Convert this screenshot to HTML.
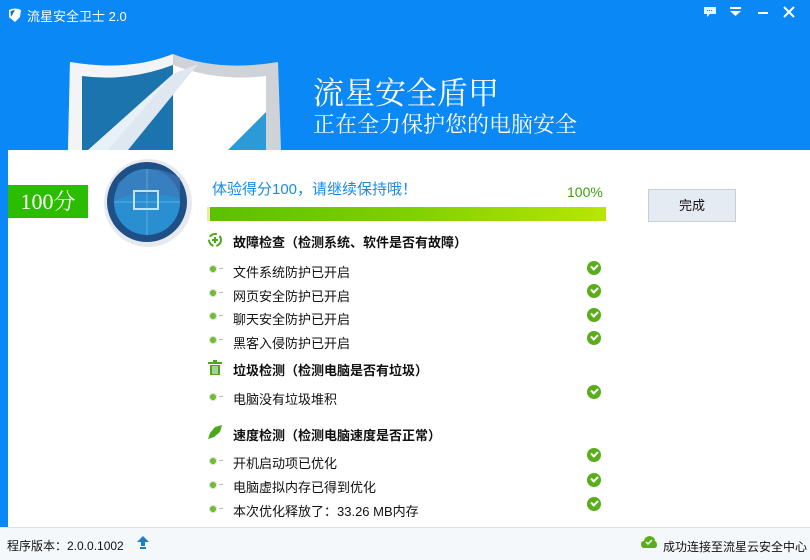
<!DOCTYPE html>
<html><head><meta charset="utf-8"><style>
*{margin:0;padding:0;box-sizing:border-box}
body{width:810px;height:560px;overflow:hidden;position:relative;background:#fff;font-family:"Liberation Sans","Noto Sans CJK SC",sans-serif;font-size:13px;color:#111}
.hdr{position:absolute;left:0;top:0;width:810px;height:150px;background:#0a88f5}
.abs{position:absolute;white-space:nowrap}
.strip{position:absolute;left:0;top:150px;width:8px;height:377px;background:#0a88f5}
.foot{position:absolute;left:0;top:527px;width:810px;height:33px;background:#f5f8fb;border-top:1px solid #d8e2ea}
.ck{position:absolute;left:587px;width:14px;height:14px;border-radius:50%;background:#5aae1a}
.ck:after{content:"";position:absolute;left:4px;top:3px;width:5px;height:3px;border-left:2px solid #fff;border-bottom:2px solid #fff;transform:rotate(-45deg)}
.bl{position:absolute;left:210px;width:6px;height:6px;border-radius:50%;background:#6cbf2a;box-shadow:0 0 0 1px #ddd}
.bl:after{content:"";position:absolute;left:9px;top:2px;width:4px;height:1px;background:#bbb}
.h{font-weight:bold;left:233px}
.it{left:233px}
</style></head><body>
<div class="hdr"></div>
<svg class="abs" style="left:8px;top:8px" width="14" height="14" viewBox="0 0 14 14"><path d="M1 2 Q7 -1 13 2 L12 9 Q7 14 7 14 Q2 10 1 9Z" fill="#fff"/><path d="M2.5 3 L7 2 L3 9Z" fill="#1a6fb0"/></svg>
<div class="abs" style="left:27px;top:6px;color:#fff;font-size:13px">流星安全卫士 2.0</div>
<svg class="abs" style="left:703px;top:6px" width="14" height="12"><rect x="1" y="1" width="12" height="7" fill="#e8f3ff"/><path d="M4 8 L4 11 L7 8Z" fill="#e8f3ff"/><rect x="4" y="4" width="1" height="1" fill="#0a88f5"/><rect x="6" y="4" width="1" height="1" fill="#0a88f5"/><rect x="8" y="4" width="1" height="1" fill="#0a88f5"/></svg>
<svg class="abs" style="left:730px;top:6px" width="12" height="12"><rect x="0" y="1" width="11" height="2" fill="#fff"/><path d="M0 5 L11 5 L5.5 10Z" fill="#fff"/></svg>
<div class="abs" style="left:758px;top:12px;width:10px;height:2px;background:#fff"></div>
<svg class="abs" style="left:783px;top:6px" width="12" height="12"><path d="M1 1 L11 11 M11 1 L1 11" stroke="#fff" stroke-width="2"/></svg>
<svg class="abs" style="left:68px;top:52px" width="215" height="98" viewBox="0 0 215 98">
<path d="M2 10 Q60 20 105 2 Q150 20 210 10 L213 98 L0 98Z" fill="#cfd3d8"/>
<path d="M2 10 Q60 20 105 2 L105 98 L0 98Z" fill="#f2f4f6"/>
<path d="M14 24 Q60 30 105 13 L105 98 L14 98Z" fill="#1b74ae"/>
<path d="M105 13 Q150 30 198 24 L198 98 L105 98Z" fill="#fff"/>
<path d="M40 98 L105 40 L105 22 L20 98Z" fill="#fff" opacity="0.9"/>
<path d="M105 22 L130 12 L60 98 L40 98Z" fill="#dfe8f1"/>
<path d="M198 60 L160 98 L198 98Z" fill="#2d9ad8"/>
</svg>
<div class="abs" style="left:313px;top:68px;color:#fff;font-size:31px;font-family:'Liberation Serif','Noto Serif CJK SC',serif">流星安全盾甲</div>
<div class="abs" style="left:313px;top:108px;color:#fff;font-size:22px;font-family:'Liberation Serif','Noto Serif CJK SC',serif">正在全力保护您的电脑安全</div>
<div class="strip"></div>
<div class="abs" style="left:8px;top:185px;width:80px;height:33px;background:#2cbd00;color:#fff;font-size:22px;line-height:33px;text-align:center;font-family:'Liberation Serif','Noto Serif CJK SC',serif">100分</div>
<svg class="abs" style="left:103px;top:158px" width="90" height="90" viewBox="0 0 90 90">
<circle cx="45" cy="45" r="44" fill="#e6eaee"/>
<circle cx="44" cy="44" r="40" fill="#1e4f86"/>
<circle cx="44" cy="44" r="33" fill="#2a8fd0"/>
<path d="M11 44 Q30 30 77 40 L77 20 Q44 0 15 25Z" fill="#3f78b8" opacity=".7"/>
<rect x="31" y="33" width="24" height="18" fill="none" stroke="#bfe4ff" stroke-width="2"/>
<path d="M44 11 V77 M11 44 H77" stroke="#9fd2f3" stroke-width="0.7" opacity=".6"/>
</svg>
<div class="abs" style="left:212px;top:178px;color:#1a8ae6;font-size:15px">体验得分100，请继续保持哦！</div>
<div class="abs" style="left:567px;top:184px;color:#3ca10e;font-size:14px">100%</div>
<div class="abs" style="left:207px;top:207px;width:399px;height:14px;background:linear-gradient(90deg,#5cc000,#7fd000 50%,#b8e600);border-left:3px solid #efe8a0"></div>
<div class="abs" style="left:648px;top:189px;width:88px;height:33px;background:#e4ebf3;border:1px solid #c8ced6;text-align:center;line-height:31px;font-size:13px">完成</div>
<svg class="abs" style="left:207px;top:232px" width="16" height="16"><circle cx="8" cy="8" r="6" fill="none" stroke="#4aa81a" stroke-width="2" stroke-dasharray="8 3"/><path d="M8 5 V11 M5 8 H11" stroke="#4aa81a" stroke-width="2"/></svg>
<div class="abs h" style="top:232px">故障检查（检测系统、软件是否有故障）</div>
<div class="bl" style="top:266px"></div><div class="abs it" style="top:262px">文件系统防护已开启</div><div class="ck" style="top:261px"></div>
<div class="bl" style="top:290px"></div><div class="abs it" style="top:286px">网页安全防护已开启</div><div class="ck" style="top:284px"></div>
<div class="bl" style="top:313px"></div><div class="abs it" style="top:309px">聊天安全防护已开启</div><div class="ck" style="top:308px"></div>
<div class="bl" style="top:337px"></div><div class="abs it" style="top:333px">黑客入侵防护已开启</div><div class="ck" style="top:331px"></div>
<svg class="abs" style="left:208px;top:360px" width="14" height="16"><rect x="0" y="2" width="14" height="2" fill="#4aa81a"/><rect x="5" y="0" width="4" height="2" fill="#4aa81a"/><rect x="2" y="5" width="10" height="10" fill="#4aa81a"/><path d="M5 6 V14 M7 6V14 M9 6V14" stroke="#fff"/></svg>
<div class="abs h" style="top:360px">垃圾检测（检测电脑是否有垃圾）</div>
<div class="bl" style="top:394px"></div><div class="abs it" style="top:389px">电脑没有垃圾堆积</div><div class="ck" style="top:385px"></div>
<svg class="abs" style="left:207px;top:424px" width="16" height="16"><path d="M15 1 L8 3 L3 9 L7 13 L13 8Z M3 9 L1 15 L7 13Z" fill="#4aa81a"/></svg>
<div class="abs h" style="top:425px">速度检测（检测电脑速度是否正常）</div>
<div class="bl" style="top:458px"></div><div class="abs it" style="top:453px">开机启动项已优化</div><div class="ck" style="top:448px"></div>
<div class="bl" style="top:482px"></div><div class="abs it" style="top:477px">电脑虚拟内存已得到优化</div><div class="ck" style="top:473px"></div>
<div class="bl" style="top:506px"></div><div class="abs it" style="top:501px">本次优化释放了：33.26 MB内存</div><div class="ck" style="top:497px"></div>
<div class="foot"></div>
<div class="abs" style="left:7px;top:537px;font-size:12px">程序版本：2.0.0.1002</div>
<svg class="abs" style="left:137px;top:536px" width="12" height="14"><path d="M6 0 L12 6 H8 V10 H4 V6 H0Z" fill="#1a7fc8"/><rect x="3" y="11" width="6" height="2" fill="#1a7fc8"/></svg>
<svg class="abs" style="left:641px;top:535px" width="16" height="14"><path d="M3 13 Q0 13 0 9 Q0 6 3 6 Q4 1 9 1 Q14 2 14 6 Q16 7 16 10 Q16 13 13 13Z" fill="#5aae1a"/><path d="M5 7 L7 9 L11 5" stroke="#fff" stroke-width="1.5" fill="none"/></svg>
<div class="abs" style="left:663px;top:538px;font-size:12px">成功连接至流星云安全中心</div>
</body></html>
